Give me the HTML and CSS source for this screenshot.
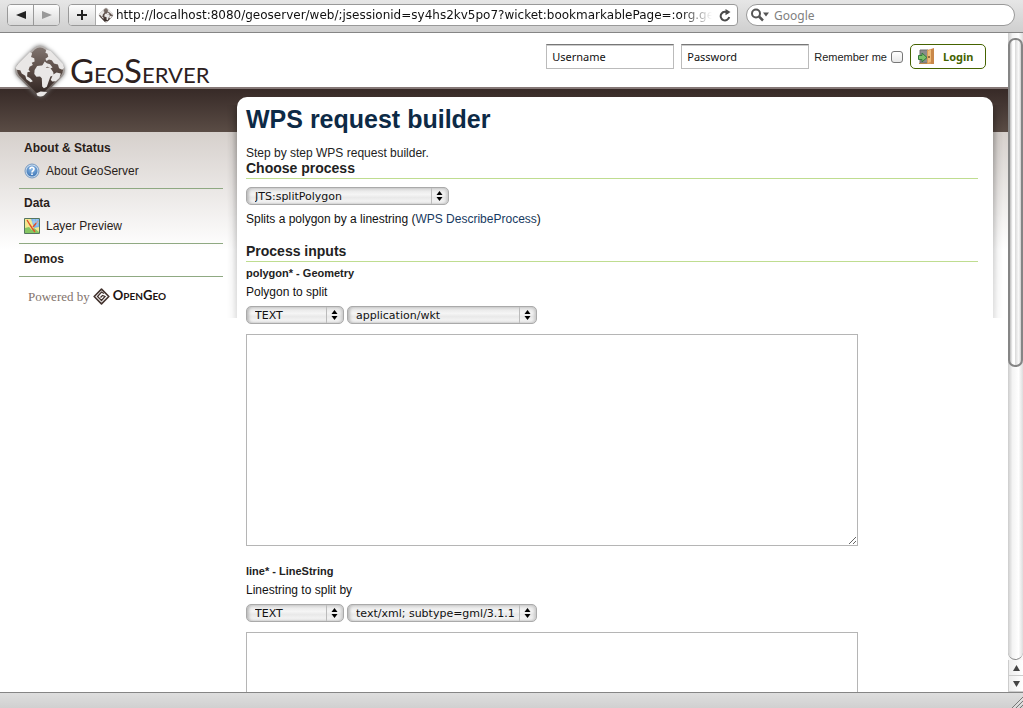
FILE: index.html
```html
<!DOCTYPE html>
<html lang="en">
<head>
<meta charset="utf-8">
<title>GeoServer: WPS request builder</title>
<link rel="stylesheet" href="styles.css">
</head>
<body>
<svg class="defs" aria-hidden="true">
  <defs>
    <linearGradient id="stone" x1="0" y1="0" x2="1" y2="1"><stop offset="0" stop-color="#857a75"/><stop offset=".5" stop-color="#5a4b45"/><stop offset="1" stop-color="#2d221f"/></linearGradient>
    <linearGradient id="rim" x1="0" y1="0" x2="1" y2="1"><stop offset="0" stop-color="#b9b5b3"/><stop offset=".55" stop-color="#a39d9a"/><stop offset="1" stop-color="#3a2d29"/></linearGradient>
    <radialGradient id="blue" cx=".5" cy=".3" r=".7"><stop offset="0" stop-color="#91bde8"/><stop offset="1" stop-color="#3f76b6"/></radialGradient>
    <symbol id="globe" viewBox="12 12 156 156">
      <rect x="34" y="35" width="112" height="112" rx="24" transform="rotate(45 90 91)" fill="url(#rim)"/>
      <rect x="39" y="40" width="102" height="102" rx="20" transform="rotate(45 90 91)" fill="url(#stone)"/>
      <g fill="#e9e7e6">
        <path d="M30 72L62 40l6 4-3 10 9 3 1 9-8 4 3 6-9 5-3 9 5 4-8 2-1 12 8 4 8 9-6 3-12-8-3-10-10-6-4-9-10-2-3-6z"/>
        <path d="M108 33l12 4 34 36 3 11-5 5-9-4-3-10-11-3-6-9-8-2-7 4-3-6 8-6-2-8-6-3z"/>
        <path d="M103 66l6 5 9 3 7 9-5 2-9-4-10 3-5-6z"/>
        <path d="M82 79l18-2 8 7 10-1 9 13 1 9-9 3-5 14-5 15-8 4-5-5-1-23-5-5-10 1-6-8 1-11z"/>
        <path d="M120 117l6-14 10-6 12 3-4 12-10 9-10 1zM80 155l12-5 18 1-9 10q-10 5-19 0z"/>
      </g>
    </symbol>
  </defs>
</svg>

<header class="toolbar">
  <div class="history">
    <button class="tool" aria-label="Back"><svg width="10" height="8" viewBox="0 0 10 8"><path d="M0 4L10 0v8z" fill="#222"/></svg></button>
    <button class="tool" aria-label="Forward"><svg width="10" height="8" viewBox="0 0 10 8"><path d="M10 4L0 0v8z" fill="#999"/></svg></button>
  </div>
  <div class="address">
    <button class="tool" aria-label="Add bookmark"><svg width="10" height="10" viewBox="0 0 10 10"><path d="M5 0v10M0 5h10" stroke="#222" stroke-width="2"/></svg></button>
    <svg class="favicon" width="16" height="16"><use href="#globe"/></svg>
    <input class="url" aria-label="Address" value="http://localhost:8080/geoserver/web/;jsessionid=sy4hs2kv5po7?wicket:bookmarkablePage=:org.geoserver.wps.web.WPSRequestBuilder">
    <button class="reload" aria-label="Reload"><svg width="12" height="13" viewBox="0 0 12 13"><path d="M9.200 4.300A4.300 4.300 0 1 0 10.200 8" fill="none" stroke="#4b4b4b" stroke-width="2"/><path d="M6.500 0v6.300L11.500 3z" fill="#4b4b4b"/></svg></button>
  </div>
  <label class="search">
    <svg width="18" height="14" viewBox="0 0 18 14"><circle cx="5" cy="5.500" r="4" fill="none" stroke="#555" stroke-width="2"/><path d="M8 8.500l4 4" stroke="#555" stroke-width="2.500"/><path d="M12 4.500h6l-3 4z" fill="#555"/></svg>
    <input type="search" placeholder="Google" aria-label="Google search">
  </label>
</header>

<div class="window">
  <div class="page">
    <div class="masthead">
      <a class="brand" href="#" aria-label="GeoServer">
        <svg class="logo" width="56" height="56"><use href="#globe"/></svg>
        <span class="wordmark">G<small>EO</small>S<small>ERVER</small></span>
      </a>
      <form class="login">
        <input class="credential" value="Username" aria-label="Username">
        <input class="credential" value="Password" aria-label="Password">
        <label class="remember">Remember me <input type="checkbox"></label>
        <button class="login-button" type="button">
          <svg width="17" height="17" viewBox="0 0 17 17"><path d="M2 2h8v13H2z" fill="#8b8b8b" stroke="#6c6c6c"/><path d="M1 15.500h9" stroke="#b98a4e"/><path d="M9 2l4-1v15H9z" fill="#d99a55"/><path d="M10 3l4-2v12l-4 2z" fill="#efbd7b"/><path d="M13 1l3-1v16h-3z" fill="#c98849"/><circle cx="11" cy="9" r="1" fill="#76502c"/><path d="M.500 7.500H4V5l5 4.500L4 14v-2.500H.500z" fill="#7cc06a" stroke="#34793a"/></svg>
          Login
        </button>
      </form>
    </div>

    <div class="body">
      <nav class="sidebar">
        <section>
          <h2>About &amp; Status</h2>
          <a href="#"><svg width="16" height="16" viewBox="0 0 16 16"><circle cx="8" cy="8" r="7" fill="#c6daee" stroke="#7899c0"/><circle cx="8" cy="8" r="5.500" fill="url(#blue)"/><path d="M6 6.200C6 3.700 10 3.700 10 6.100c0 1.700-2 1.700-2 3.300M8 10.500v1.500" fill="none" stroke="#fff" stroke-width="1.600"/></svg>About GeoServer</a>
        </section>
        <section>
          <h2>Data</h2>
          <a href="#"><svg width="16" height="16" viewBox="0 0 16 16"><path d="M.500.500h15v15H.500z" fill="#f3e88f"/><path d="M7 1h8v8l-5 1z" fill="#7eb5ec"/><path d="M1 10l4-1 3 3 2-2 5 4v1H1z" fill="#86c663"/><path d="M3 2l3 5 2 3 3 4M14 3l-5 6" fill="none" stroke="#e1502b" stroke-width="1.400"/><path d="M10 1v5M13 1v7M8 4h7" stroke="#b4d8f5" stroke-width=".7"/><path d="M.500.500h15v15H.500z" fill="none" stroke="#55765f"/></svg>Layer Preview</a>
        </section>
        <section>
          <h2>Demos</h2>
        </section>
        <p class="powered">Powered by
          <svg width="17" height="17" viewBox="0 0 17 17"><path d="M8.500 1.200L15.800 8.500 8.500 15.800 1.200 8.500z" fill="#fff" stroke="#44342f" stroke-width="1.700" stroke-linejoin="round"/><path d="M11 5.500L8.500 4 4.500 8.500 8.500 12.500 12 8.500 9.500 7.500 7.500 9.500" fill="none" stroke="#44342f" stroke-width="1.300"/></svg>
          <span class="opengeo">O<small>PEN</small>G<small>EO</small></span>
        </p>
      </nav>

      <main class="panel">
        <h1>WPS request builder</h1>
        <p class="intro">Step by step WPS request builder.</p>
        <h2>Choose process</h2>
        <div class="selectors">
          <span class="picker picker-process"><select aria-label="Process"><option>JTS:splitPolygon</option></select><svg width="7" height="10" viewBox="0 0 7 10"><path d="M3.500 0L6.500 4h-6zM3.500 10L.500 6h6z"/></svg></span>
        </div>
        <p class="summary">Splits a polygon by a linestring (<a href="#">WPS DescribeProcess</a>)</p>

        <h2>Process inputs</h2>
        <section class="field">
          <h3>polygon* - Geometry</h3>
          <label for="polygon">Polygon to split</label>
          <div class="selectors">
            <span class="picker picker-kind"><select aria-label="Polygon source"><option>TEXT</option></select><svg width="7" height="10" viewBox="0 0 7 10"><path d="M3.500 0L6.500 4h-6zM3.500 10L.500 6h6z"/></svg></span>
            <span class="picker picker-mime"><select aria-label="Polygon format"><option>application/wkt</option></select><svg width="7" height="10" viewBox="0 0 7 10"><path d="M3.500 0L6.500 4h-6zM3.500 10L.500 6h6z"/></svg></span>
          </div>
          <textarea id="polygon"></textarea>
        </section>
        <section class="field">
          <h3>line* - LineString</h3>
          <label for="line">Linestring to split by</label>
          <div class="selectors">
            <span class="picker picker-kind"><select aria-label="Line source"><option>TEXT</option></select><svg width="7" height="10" viewBox="0 0 7 10"><path d="M3.500 0L6.500 4h-6zM3.500 10L.500 6h6z"/></svg></span>
            <span class="picker picker-mime"><select aria-label="Line format"><option>text/xml; subtype=gml/3.1.1</option></select><svg width="7" height="10" viewBox="0 0 7 10"><path d="M3.500 0L6.500 4h-6zM3.500 10L.500 6h6z"/></svg></span>
          </div>
          <textarea id="line"></textarea>
        </section>
      </main>
    </div>
  </div>

  <div class="scrollbar">
    <div class="track"><div class="thumb"></div></div>
    <button aria-label="Scroll up"><svg width="7" height="6" viewBox="0 0 7 6"><path d="M3.500 0L7 6H0z" fill="#444"/></svg></button>
    <button aria-label="Scroll down"><svg width="7" height="6" viewBox="0 0 7 6"><path d="M3.500 6L7 0H0z" fill="#444"/></svg></button>
  </div>
</div>

<footer class="statusbar"><svg width="12" height="12" viewBox="0 0 12 12"><path d="M1 12L12 1M5 12l7-7M9 12l3-3" stroke="#777"/><path d="M2 12.500L12.500 2M6 12.500L12.500 6" stroke="#f5f5f5" stroke-width=".6"/></svg></footer>
</body>
</html>
```

FILE: styles.css
```css
* { box-sizing: border-box; }

body {
  margin: 0;
  height: 100vh;
  display: flex;
  flex-direction: column;
  overflow: hidden;
  background: #fff;
  color: #222;
  font: 12px/16px "Liberation Sans", Arial, sans-serif;
}

h1, h2, h3, p { margin: 0; }
input, select, button, textarea { margin: 0; font-family: "Noto Sans", sans-serif; color: #111; }
button { padding: 0; border: 0; background: none; display: flex; align-items: center; justify-content: center; }
a { color: inherit; text-decoration: none; }
svg { flex: none; }
.defs { position: absolute; width: 0; height: 0; }

/* Browser toolbar */
.toolbar {
  flex: none;
  height: 33px;
  display: flex;
  align-items: flex-start;
  gap: 8px;
  padding: 4px 8px 0 7px;
  border-bottom: 1px solid #858585;
  background: linear-gradient(#e6e6e6, #cfcfcf);
}
.history, .address, .search {
  display: flex;
  align-items: center;
  height: 22px;
  border: 1px solid #999;
  border-radius: 4px;
  background: #fff;
  overflow: hidden;
}
.tool { width: 25px; height: 20px; background: linear-gradient(#fdfdfd, #d9d9d9); }
.tool + .tool { width: 26px; border-left: 1px solid #999; }
.address { flex: 1; min-width: 0; }
.address .tool { border-right: 1px solid #aaa; width: 27px; }
.favicon { margin: 0 2px; }
.url {
  flex: 1;
  min-width: 0;
  height: 20px;
  padding: 0;
  border: 0;
  outline: 0;
  background: none;
  font: 12px "DejaVu Sans", sans-serif;
  -webkit-mask-image: linear-gradient(to left, transparent, #000 32px);
  mask-image: linear-gradient(to left, transparent, #000 32px);
}
.reload { width: 25px; height: 20px; }
.search { width: 269px; padding-left: 4px; gap: 5px; border-radius: 11px; }
.search input { flex: 1; min-width: 0; padding: 0; border: 0; outline: 0; background: none; font-size: 12px; }
.search input::placeholder { color: #808080; }

/* Page viewport */
.window { flex: 1; min-height: 0; display: flex; }
.page { flex: 1; min-width: 0; overflow: hidden; }
.masthead {
  height: 56px;
  display: flex;
  justify-content: space-between;
  padding: 9px 22px 0 12px;
  border-bottom: 2px solid #857876;
}
.brand { position: relative; z-index: 1; display: flex; align-items: flex-start; gap: 2px; color: #2d211e; }
.logo { filter: drop-shadow(0 0 2px #777); }
.wordmark { padding-top: 8px; font: 33px/40px Lato, sans-serif; }
.wordmark small { font-size: 22px; }
.login { display: flex; align-items: flex-start; gap: 7px; padding-top: 2px; }
.credential {
  width: 128px;
  height: 25px;
  padding: 0 5px;
  border: 1px solid #bbb;
  border-top-color: #777;
  box-shadow: inset 0 1px #ccc;
  font-size: 11px;
}
.remember { display: flex; align-items: center; gap: 4px; height: 26px; margin-left: -2px; font-size: 11px; }
.remember input {
  appearance: none;
  width: 12px;
  height: 12px;
  border: 1px solid #777;
  border-radius: 3px;
  background: linear-gradient(#fff, #e8e8e8);
}
.login-button {
  width: 76px;
  height: 25px;
  justify-content: flex-start;
  gap: 8px;
  padding-left: 7px;
  border: 1px solid #456300;
  border-radius: 5px;
  background: #fff;
  color: #456300;
  font-size: 11px;
  font-weight: bold;
}

.body {
  display: flex;
  padding: 8px 15px 0 0;
  background:
    linear-gradient(#372a27, #5a4c45) 0 0 / 100% 43px no-repeat,
    linear-gradient(#d6d0cc, #fff) 0 43px / 100% 118px no-repeat;
}
.sidebar { flex: none; width: 237px; padding: 42px 14px 0 19px; color: #2a1e1a; }
.sidebar section { padding: 6px 5px 9px; border-bottom: 1px solid #8fa982; }
.sidebar section:first-child { padding-top: 1px; }
.sidebar section:last-of-type { padding-top: 7px; }
.sidebar h2 { font-size: 12px; line-height: 16px; }
.sidebar a { display: flex; align-items: center; gap: 6px; height: 16px; margin-top: 7px; }
.powered {
  display: flex;
  align-items: center;
  gap: 3px;
  padding: 10px 0 0 9px;
  color: #82736d;
  font: 13px/17px "Liberation Serif", serif;
}
.opengeo { color: #1d1512; font: bold 13px/17px Lato, sans-serif; }
.opengeo small { font-size: 10px; }

.panel {
  position: relative;
  flex: 1;
  min-width: 0;
  padding: 8px 15px 0 9px;
  border-radius: 10px 10px 0 0;
  background: #fff;
}
/* Side shadows that fade out down the panel */
.panel::before {
  content: "";
  position: absolute;
  inset: 0 -10px auto;
  height: 221px;
  pointer-events: none;
  background:
    linear-gradient(to left, #0004, #0001 50%, transparent) 0 8px / 10px 100% no-repeat,
    linear-gradient(to right, #0004, #0001 50%, transparent) 100% 8px / 10px 100% no-repeat;
  -webkit-mask-image: linear-gradient(transparent, #000 20px, #0006);
  mask-image: linear-gradient(transparent, #000 20px, #0006);
}
.panel h1 { color: #0d2a46; font-size: 25px; line-height: 28px; }
.intro { padding-top: 12px; font-size: 12px; }
.panel h2 { font-size: 14px; line-height: 15px; padding-bottom: 2px; border-bottom: 1px solid #bfdd90; }
.summary { padding: 6px 0 17px; color: #111; }
.summary a { color: #173a61; }
.field { padding-bottom: 14px; }
.field h3 { padding-top: 3px; font-size: 11px; line-height: 16px; }
.field label { display: block; padding-top: 3px; color: #111; }
.selectors { display: flex; gap: 3px; padding-top: 8px; }
.field .selectors { padding-top: 6px; }
.picker { position: relative; display: flex; height: 18px; }
.picker-process { width: 203px; }
.picker-kind { width: 98px; }
.picker-mime { width: 190px; }
.picker select {
  appearance: none;
  width: 100%;
  padding: 0 18px 0 8px;
  border: 1px solid #aaa;
  border-radius: 5px;
  background:
    linear-gradient(#bbb, #bbb) right 16px top 0 / 1px 100% no-repeat,
    linear-gradient(#e2e2e2, #f5f5f5 40%, #e9e9e9 60%, #fafafa);
  box-shadow: inset 2px 0 3px #bbb, inset -2px 0 3px #ccc;
  font: 11px "DejaVu Sans", sans-serif;
}
.picker svg { position: absolute; right: 6px; top: 4px; pointer-events: none; }
textarea {
  display: block;
  width: 612px;
  max-width: 100%;
  height: 212px;
  margin-top: 10px;
  border: 1px solid #b5b5b5;
  background: #fff;
  resize: both;
}

/* Scroll bar and status bar */
.scrollbar { flex: none; width: 15px; display: flex; flex-direction: column; background: #f8f8f8; }
.scrollbar button { height: 16px; border: 1px solid #ccc; border-width: 0 0 1px 1px; background: linear-gradient(to right, #eee, #fff); }
.track {
  flex: 1;
  padding-top: 5px;
  border-radius: 0 0 8px 8px;
  border-bottom: 1px solid #888;
  background: linear-gradient(to right, #ccc, #f4f4f4 30%, #fff 70%, #ddd);
}
.thumb {
  height: 53%;
  border: 2px solid #858585;
  border-radius: 7px;
  background: linear-gradient(to right, #bbb, #fff 25%, #fff 45%, #ddd 50%, #fafafa 80%, #ccc);
}
.statusbar {
  flex: none;
  height: 16px;
  display: flex;
  align-items: flex-end;
  justify-content: flex-end;
  border-top: 1px solid #858585;
  background: linear-gradient(#dedede, #d0d0d0);
}
```
